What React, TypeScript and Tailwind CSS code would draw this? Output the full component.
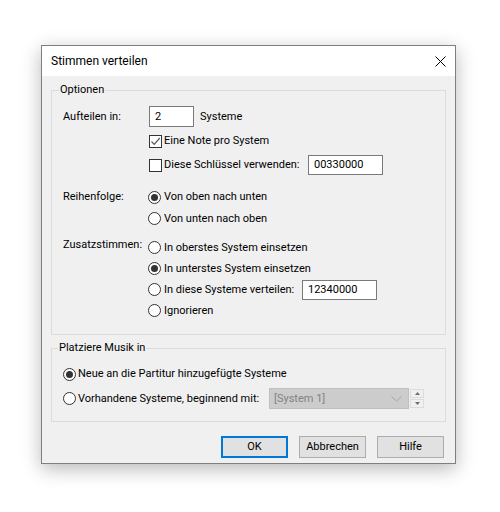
import React from "react";

const Checkbox = ({ checked }: { checked?: boolean }) => (
  <span className="w-[13px] h-[13px] border border-[#333333] bg-white flex items-center justify-center shrink-0">
    {checked && (
      <svg width="11" height="11" viewBox="0 0 11 11">
        <path d="M1.5 5.5 L4.2 8.3 L9.8 2" fill="none" stroke="#5a5a5a" strokeWidth="1.2" />
      </svg>
    )}
  </span>
);

const Radio = ({ checked }: { checked?: boolean }) => (
  <span className="w-[13px] h-[13px] rounded-full border border-[#333333] bg-white flex items-center justify-center shrink-0">
    {checked && <span className="w-[7px] h-[7px] rounded-full bg-[#333333]" />}
  </span>
);

const Field = ({ value, w, h }: { value: string; w: string; h: string }) => (
  <div className={`${w} ${h} border border-[#7a7a7a] bg-white pl-[5px] flex items-center shrink-0`}>{value}</div>
);

export default function App() {
  return (
    <div className="w-[500px] h-[512px] bg-white pl-[41px] pt-[45px] text-[11px] leading-[16px] text-black whitespace-nowrap font-['Roboto',Arial,sans-serif]">
      <div className="w-[415px] h-[419px] border border-[#7f7f7f] bg-[#f0f0f0] shadow-[0_5px_18px_rgba(0,0,0,0.28)] flex flex-col">
        {/* Title bar */}
        <div className="h-[30px] bg-white flex items-center justify-between pl-[9px] pr-[9px] text-[12px]">
          <span>Stimmen verteilen</span>
          <svg width="11" height="11" viewBox="0 0 11 11">
            <path d="M0.5 0.5 L10.5 10.5 M10.5 0.5 L0.5 10.5" stroke="#000" strokeWidth="1" />
          </svg>
        </div>

        {/* Group 1 */}
        <div className="relative mx-[9px] mt-[14px] h-[245px] border border-[#dcdcdc] pl-[11px] pt-[15px]">
          <span className="absolute left-[7px] top-[-9px] px-[1px] bg-[#f0f0f0]">Optionen</span>

          {/* Aufteilen */}
          <div className="flex">
            <div className="w-[85px] h-[22px] flex items-center shrink-0">Aufteilen in:</div>
            <div className="flex flex-col">
              <div className="h-[21px] flex items-center ml-[1px]">
                <Field value="2" w="w-[45px]" h="h-[21px]" />
                <span className="ml-[6px]">Systeme</span>
              </div>
              <div className="h-[20px] mt-[4px] flex items-center ml-[1px]">
                <Checkbox checked />
                <span className="ml-[2px]">Eine Note pro System</span>
              </div>
              <div className="h-[20px] mt-[4px] flex items-center ml-[1px]">
                <div className="w-[159px] flex items-center shrink-0">
                  <Checkbox />
                  <span className="ml-[2px]">Diese Schlüssel verwenden:</span>
                </div>
                <Field value="00330000" w="w-[75px]" h="h-[20px]" />
              </div>
            </div>
          </div>

          {/* Reihenfolge */}
          <div className="flex mt-[11px]">
            <div className="w-[85px] h-[22px] flex items-center shrink-0">Reihenfolge:</div>
            <div className="flex flex-col">
              <div className="h-[22px] flex items-center">
                <Radio checked />
                <span className="ml-[3px]">Von oben nach unten</span>
              </div>
              <div className="h-[21px] flex items-center">
                <Radio />
                <span className="ml-[3px]">Von unten nach oben</span>
              </div>
            </div>
          </div>

          {/* Zusatzstimmen */}
          <div className="flex mt-[8px]">
            <div className="w-[85px] shrink-0">Zusatzstimmen:</div>
            <div className="flex flex-col">
              <div className="h-[21px] flex items-center">
                <Radio />
                <span className="ml-[3px]">In oberstes System einsetzen</span>
              </div>
              <div className="h-[21px] flex items-center">
                <Radio checked />
                <span className="ml-[3px]">In unterstes System einsetzen</span>
              </div>
              <div className="h-[21px] flex items-center">
                <div className="w-[154px] flex items-center shrink-0">
                  <Radio />
                  <span className="ml-[3px]">In diese Systeme verteilen:</span>
                </div>
                <Field value="12340000" w="w-[75px]" h="h-[20px]" />
              </div>
              <div className="h-[21px] flex items-center">
                <Radio />
                <span className="ml-[3px]">Ignorieren</span>
              </div>
            </div>
          </div>
        </div>

        {/* Group 2 */}
        <div className="relative mx-[9px] mt-[13px] h-[74px] border border-[#dcdcdc] pl-[11px] pt-[14px]">
          <span className="absolute left-[6px] top-[-9px] px-[1px] bg-[#f0f0f0]">Platziere Musik in</span>
          <div className="h-[22px] flex items-center">
            <Radio checked />
            <span className="ml-[2px]">Neue an die Partitur hinzugefügte Systeme</span>
          </div>
          <div className="h-[21px] mt-[3px] flex items-center">
            <div className="w-[206px] flex items-center shrink-0">
              <Radio />
              <span className="ml-[2px]">Vorhandene Systeme, beginnend mit:</span>
            </div>
            <div className="w-[140px] h-[21px] bg-[#cccccc] border border-[#bfbfbf] flex items-center justify-between pl-[4px] pr-[6px] text-[#838383] shrink-0">
              <span>[System 1]</span>
              <svg width="11" height="6" viewBox="0 0 11 6">
                <path d="M0.5 0.5 L5.5 5 L10.5 0.5" fill="none" stroke="#a6a6a6" strokeWidth="1" />
              </svg>
            </div>
            <div className="ml-[1px] flex flex-col gap-[1px]">
              <div className="w-[14px] h-[9px] border border-[#dcdcdc] bg-[#f0f0f0] flex items-center justify-center">
                <svg width="5" height="3" viewBox="0 0 5 3">
                  <path d="M0 3 L2.5 0 L5 3 Z" fill="#6d6d6d" />
                </svg>
              </div>
              <div className="w-[14px] h-[9px] border border-[#dcdcdc] bg-[#f0f0f0] flex items-center justify-center">
                <svg width="5" height="3" viewBox="0 0 5 3">
                  <path d="M0 0 L5 0 L2.5 3 Z" fill="#6d6d6d" />
                </svg>
              </div>
            </div>
          </div>
        </div>

        {/* Buttons */}
        <div className="mt-[14px] flex justify-end gap-[11px] pr-[11px]">
          <div className="w-[67px] h-[22px] border-2 border-[#0078d7] bg-[#e1e1e1] flex items-center justify-center">OK</div>
          <div className="w-[67px] h-[22px] border border-[#adadad] bg-[#e1e1e1] flex items-center justify-center">Abbrechen</div>
          <div className="w-[67px] h-[22px] border border-[#adadad] bg-[#e1e1e1] flex items-center justify-center">Hilfe</div>
        </div>
      </div>
    </div>
  );
}
